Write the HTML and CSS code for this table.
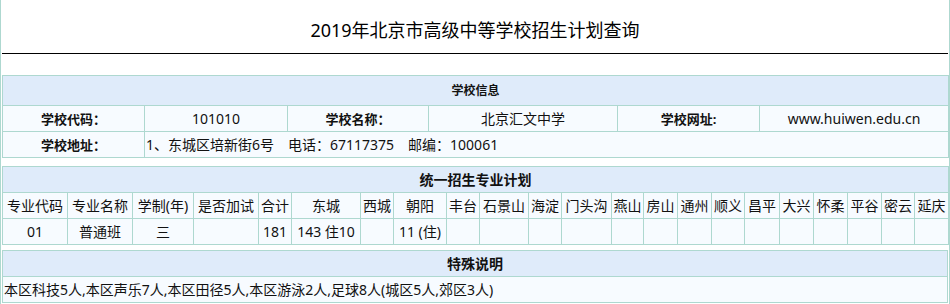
FILE: index.html
```html
<!DOCTYPE html>
<html lang="zh-CN">
<head>
<meta charset="UTF-8">
<meta name="viewport" content="width=device-width, initial-scale=1.0">
<link rel="stylesheet" href="styles.css">
<title>2019年北京市高级中等学校招生计划查询</title>
</head>

<body>
  <div class="page">

    <div class="title">2019年北京市高级中等学校招生计划查询</div>

    <!-- 学校基本信息 -->
    <table class="info">
      <colgroup>
        <col style="width: 142px"><col style="width: 143px"><col style="width: 141px">
        <col style="width: 189px"><col style="width: 142px"><col style="width: 189px">
      </colgroup>
      <tr class="head"><td colspan="6">学校信息</td></tr>
      <tr>
        <td class="label">学校代码<span class="colon">：</span></td>
        <td>101010</td>
        <td class="label">学校名称<span class="colon">：</span></td>
        <td>北京汇文中学</td>
        <td class="label">学校网址:</td>
        <td>www.huiwen.edu.cn</td>
      </tr>
      <tr>
        <td class="label">学校地址<span class="colon">：</span></td>
        <td colspan="5" class="left">1、东城区培新街6号&emsp;电话<span class="colon">：</span>67117375&emsp;邮编<span class="colon">：</span>100061</td>
      </tr>
    </table>

    <!-- 统一招生专业计划 -->
    <table class="plan">
      <colgroup>
        <col style="width: 65px"><col style="width: 65px"><col style="width: 61px"><col style="width: 65px">
        <col style="width: 33px"><col style="width: 69px"><col style="width: 33px"><col style="width: 53px">
        <col style="width: 33px"><col style="width: 49px"><col style="width: 33px"><col style="width: 50px">
        <col style="width: 32px"><col style="width: 34px"><col style="width: 34px"><col style="width: 33px">
        <col style="width: 35px"><col style="width: 34px"><col style="width: 34px"><col style="width: 34px">
        <col style="width: 33px"><col style="width: 34px">
      </colgroup>
      <tr class="head"><td colspan="22">统一招生专业计划</td></tr>
      <tr>
        <td>专业代码</td><td>专业名称</td><td>学制(年)</td><td>是否加试</td><td>合计</td>
        <td>东城</td><td>西城</td><td>朝阳</td><td>丰台</td><td>石景山</td><td>海淀</td>
        <td>门头沟</td><td>燕山</td><td>房山</td><td>通州</td><td>顺义</td><td>昌平</td>
        <td>大兴</td><td>怀柔</td><td>平谷</td><td>密云</td><td>延庆</td>
      </tr>
      <tr>
        <td>01</td><td>普通班</td><td>三</td><td></td><td>181</td>
        <td>143 住10</td><td></td><td>11 (住)</td><td></td><td></td><td></td>
        <td></td><td></td><td></td><td></td><td></td><td></td>
        <td></td><td></td><td></td><td></td><td></td>
      </tr>
    </table>

    <!-- 特殊说明 -->
    <table class="note">
      <tr class="head"><td>特殊说明</td></tr>
      <tr><td class="left">本区科技5人,本区声乐7人,本区田径5人,本区游泳2人,足球8人(城区5人,郊区3人)</td></tr>
    </table>

  </div>
</body>
</html>
```

FILE: styles.css
```css
body {
  margin: 0;
  background-color: #fff;
  font-family: "Noto Sans", "Noto Sans CJK SC", sans-serif;
  color: #111;
}

.page {
  width: 948px;
  height: 304px;
  border-left: 1px solid #aed8d0;
  border-right: 1px solid #aed8d0;
}

/* 页面标题 */
.title {
  height: 53px;
  line-height: 60px;
  text-align: center;
  font-size: 18px;
  color: #000;
  border-bottom: 1px solid #000;
  margin: 0 1px;
}

table {
  width: 946px;
  margin: 0 1px;
  border-collapse: collapse;
  table-layout: fixed;
  font-size: 14px;
}

td {
  border: 1px solid #aed8d0;
  background-color: #f7fbff;
  text-align: center;
  height: 25px;
  padding: 0 1px;
  line-height: 18px;
  white-space: nowrap;
  overflow: hidden;
}

.head td {
  background-color: #dfebfa;
  font-size: 14px;
  font-weight: bold;
}

.label {
  font-size: 13px;
  font-weight: bold;
}

/* 全角冒号居中显示 */
.colon {
  font-family: "Noto Sans CJK JP", sans-serif;
}

.left {
  text-align: left;
}

.info {
  margin-top: 21px;
}

.info .head td {
  height: 29px;
  font-size: 12px;
}

.plan {
  margin-top: 8px;
}

.note {
  margin-top: 5px;
}
```
